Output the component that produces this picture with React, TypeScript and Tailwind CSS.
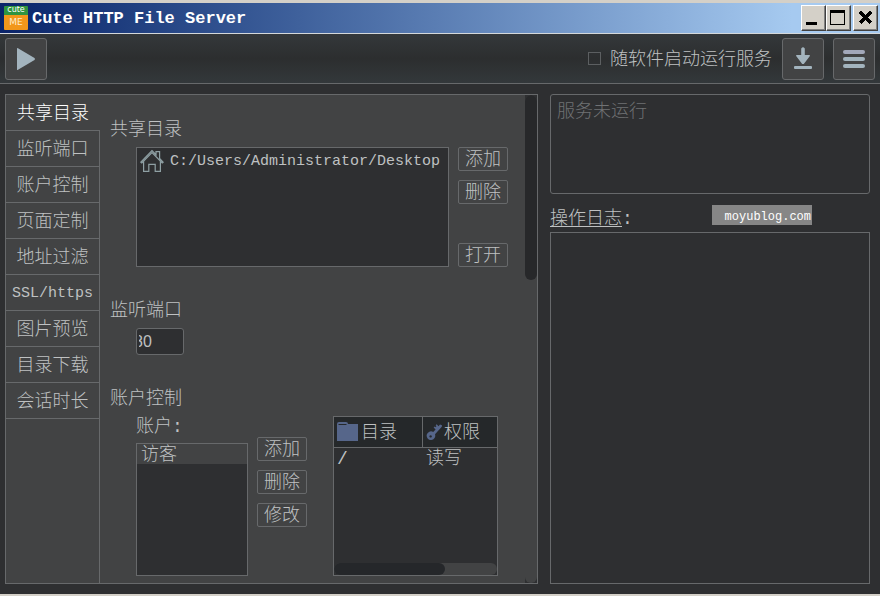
import React, { useState } from 'react';

const tabs = ['共享目录', '监听端口', '账户控制', '页面定制', '地址过滤', 'SSL/https', '图片预览', '目录下载', '会话时长'];

const isLatin = (text: string) => /^[\x20-\x7e]+$/.test(text);

const AppLogo: React.FC = () => (
  <div className="flex h-6 w-6 flex-col overflow-hidden rounded-[1px] text-center font-['DejaVu_Sans'] font-normal text-white" aria-hidden="true">
    <span className="h-[9px] bg-[#2f9440] text-[8px] leading-[8px]">cute</span>
    <span className="flex-1 bg-[#f2971b] text-[9px] leading-[15px] text-[#ffeccc]">ME</span>
  </div>
);

const CaptionButton: React.FC<{ label: string; children: React.ReactNode }> = ({ label, children }) => (
  <button
    aria-label={label}
    className="h-[26px] w-[25px] border border-t-white border-r-[#404040] border-b-[#404040] border-l-white bg-[#d4d0c8] shadow-[inset_-1px_-1px_0_#808080]"
  >
    <svg width="23" height="24" viewBox="0 0 23 24" fill="none" stroke="#000" shapeRendering="crispEdges">
      {children}
    </svg>
  </button>
);

const ToolButton: React.FC<{ label: string; onClick?: () => void; children: React.ReactNode }> = ({ label, onClick, children }) => (
  <button
    aria-label={label}
    onClick={onClick}
    className="h-[42px] w-[42px] shrink-0 rounded-[3px] border border-[#67696b] bg-[#424344]"
  >
    <svg width="40" height="40" viewBox="0 0 40 40" fill="#a3b4be">
      {children}
    </svg>
  </button>
);

const SmallButton: React.FC<{ children: React.ReactNode }> = ({ children }) => (
  <button className="h-6 w-[50px] rounded-[2px] border border-[#67696b] pt-px text-[18px] leading-[23px] whitespace-nowrap">
    {children}
  </button>
);

const HouseIcon: React.FC = () => (
  <svg width="24" height="24" viewBox="0 0 24 24" fill="none" stroke="#8fa0a4" strokeWidth="1.2" className="shrink-0" aria-hidden="true">
    <path d="M.8 13.2 12 1.6l4 4.1V2.6h3.6v6.8l3.6 3.8-1 .8L12 3.6 1.8 14z" />
    <path d="M3.6 12.2v10.2h5.2v-7h6.4v7h5.2V12.2" />
  </svg>
);

const FolderIcon: React.FC = () => (
  <svg width="22" height="20" viewBox="0 0 22 20" fill="#56668a" className="shrink-0" aria-hidden="true">
    <path d="M0 2Q0 0 2 0H9Q11 0 11 2H21V19H0z" />
    <path d="M1.500 2.500H9.500" stroke="#25282a" />
  </svg>
);

const KeyIcon: React.FC = () => (
  <svg width="17" height="18" viewBox="0 0 17 18" fill="#56668a" className="shrink-0" aria-hidden="true">
    <path
      fillRule="evenodd"
      d="M7.200 9 9.600 6.600 7.600 4.600 8.800 3.400 10 4.300 10.300 3 9.600 2.200 10.700 1.200 12.500 3.200 14 1.400 16 2.200 15.800 3.800 9 11.200A4.300 4.300 0 1 1 7.200 9zM4.600 12.200a1.200 1.200 0 1 0 .010 0z"
    />
  </svg>
);

const Section: React.FC<{ title: string; children: React.ReactNode }> = ({ title, children }) => (
  <section>
    <h2 className="text-[18px] leading-7">{title}</h2>
    {children}
  </section>
);

const App: React.FC = () => {
  const [activeTab, setActiveTab] = useState(tabs[0]);
  const [autoRun, setAutoRun] = useState(false);
  const [port, setPort] = useState('80');

  return (
    <div className="flex min-h-screen flex-col border-t-[3px] border-b-2 border-[#d4d0c8] bg-[#2e2f31] font-['Liberation_Mono','Noto_Sans_CJK_SC',monospace] font-light text-[#bfc1c2]">
      {/* Title bar */}
      <header className="flex h-[31px] items-center border-b border-[#d4d8da] bg-linear-to-r from-[#0a246a] to-[#a6caf0] to-90% pr-[2px] pl-1">
        <AppLogo />
        <h1 className="ml-1 flex-1 pt-[2px] text-[17px] font-bold text-white">Cute HTTP File Server</h1>
        <CaptionButton label="最小化">
          <path d="M4 17.500H15" strokeWidth="3" />
        </CaptionButton>
        <CaptionButton label="最大化">
          <path d="M3.500 5V18.500H17.500V5" />
          <path d="M3 5.500H18" strokeWidth="3" />
        </CaptionButton>
        <div className="ml-[2px] flex">
          <CaptionButton label="关闭">
            <path d="M6 6 17 17M17 6 6 17" strokeWidth="3.500" />
          </CaptionButton>
        </div>
      </header>

      {/* Toolbar */}
      <div className="flex h-[50px] items-center border-b border-[#67696b] bg-linear-to-b from-[#34383b] via-[#2c2e2f] to-[#33383b] px-[5px]">
        <ToolButton label="启动服务">
          <path d="M11 9.500Q11 8.500 12 9.200L28.500 19Q29.500 20 28.500 21L12 30.800Q11 31.500 11 30.500z" />
        </ToolButton>
        <label className="ml-auto flex items-center gap-[9px] text-[18px] leading-6">
          <input
            type="checkbox"
            checked={autoRun}
            onChange={(e) => setAutoRun(e.target.checked)}
            className="h-[13px] w-[13px] appearance-none border border-[#5c5f61] checked:bg-[#a3b4be]"
          />
          <span className="pt-[2px]">随软件启动运行服务</span>
        </label>
        <div className="ml-[10px] flex gap-[9px]">
          <ToolButton label="下载">
            <path d="M18.200 9.500Q20 7 21.800 9.500V16H26.500Q27.500 16.500 26.500 17.500L20.800 25H19.200L13.500 17.500Q12.500 16.500 13.500 16H18.200z" />
            <rect x="11" y="27" width="18" height="3" rx="1" />
          </ToolButton>
          <ToolButton label="菜单">
            <rect x="9" y="11" width="22" height="4" rx="2" fill="#a2a8ba" />
            <rect x="9" y="18" width="22" height="4" rx="2" />
            <rect x="9" y="25" width="22" height="4" rx="2" />
          </ToolButton>
        </div>
      </div>

      <main className="grid flex-1 grid-cols-[533fr_320fr] gap-3 py-[10px] pr-[10px] pl-[5px]">
        {/* Settings */}
        <div className="flex min-w-0 border border-[#67696b] bg-[#424344]">
          <nav role="tablist" className="flex w-[94px] shrink-0 flex-col">
            {tabs.map((tab) => (
              <button
                key={tab}
                role="tab"
                aria-selected={tab === activeTab}
                onClick={() => setActiveTab(tab)}
                className={`h-9 border-b border-[#67696b] pt-1 whitespace-nowrap ${isLatin(tab) ? 'text-[15px]' : 'text-[18px]'} ${
                  tab === activeTab ? 'text-white' : 'border-r'
                }`}
              >
                {tab}
              </button>
            ))}
            <div className="flex-1 border-r border-[#67696b]" />
          </nav>

          <div className="flex min-w-0 flex-1 flex-col gap-[30px] pt-[21px] pb-[7px] pl-[10px]">
            <Section title="共享目录">
              <div className="mt-[3px] flex gap-[9px] pr-[17px] pl-[26px]">
                <ul className="h-[120px] min-w-0 flex-1 border border-[#67696b] bg-[#2e2f31]">
                  <li className="flex h-[26px] items-center gap-[6px] pl-[3px] text-[15px]">
                    <HouseIcon />
                    <span className="pt-[3px]">C:/Users/Administrator/Desktop</span>
                  </li>
                </ul>
                <div className="flex flex-col gap-[9px]">
                  <SmallButton>添加</SmallButton>
                  <SmallButton>删除</SmallButton>
                  <div className="mt-auto flex">
                    <SmallButton>打开</SmallButton>
                  </div>
                </div>
              </div>
            </Section>

            <Section title="监听端口">
              <div className="mt-[3px] flex pl-[26px]">
                <input
                  aria-label="监听端口"
                  value={port}
                  onChange={(e) => setPort(e.target.value)}
                  className="h-[27px] w-12 rounded-[3px] border border-[#67696b] bg-[#2e2f31] pt-px pl-[2px] indent-[-5px] font-['Liberation_Sans',sans-serif] text-[16px]"
                />
              </div>
            </Section>

            <Section title="账户控制">
              <div className="flex pr-[27px] pl-[26px]">
                <div className="flex w-28 flex-col gap-[2px]">
                  <h3 className="text-[18px] leading-7">账户:</h3>
                  <ul className="h-[133px] border border-[#67696b] bg-[#2e2f31]">
                    <li className="h-5 bg-[#424344] pl-1 text-[18px] leading-[22px]">访客</li>
                  </ul>
                </div>
                <div className="ml-[9px] flex flex-col gap-[9px] pt-6">
                  <SmallButton>添加</SmallButton>
                  <SmallButton>删除</SmallButton>
                  <SmallButton>修改</SmallButton>
                </div>
                <div className="ml-[26px] flex min-w-0 flex-1 pt-[3px]">
                  <div className="flex h-[160px] flex-1 flex-col border border-[#67696b] bg-[#2e2f31]">
                    <table className="w-full table-fixed border-separate border-spacing-0 text-left text-[18px]">
                      <thead className="bg-[#25282a]">
                        <tr>
                          <th className="w-[89px] border-r border-b border-[#67696b] p-0 font-light">
                            <div className="flex h-[30px] items-center gap-[2px] pl-[3px]">
                              <FolderIcon />
                              <span className="pt-[2px]">目录</span>
                            </div>
                          </th>
                          <th className="border-b border-[#67696b] p-0 font-light">
                            <div className="flex h-[30px] items-center gap-px pl-[3px]">
                              <KeyIcon />
                              <span className="pt-[2px]">权限</span>
                            </div>
                          </th>
                        </tr>
                      </thead>
                      <tbody>
                        <tr className="h-[22px] leading-[22px]">
                          <td className="p-0 pl-[3px]">/</td>
                          <td className="p-0 pl-[3px]">读写</td>
                        </tr>
                      </tbody>
                    </table>
                    <div className="mt-auto h-3 rounded-full bg-[#424344]">
                      <div className="h-3 w-[68%] rounded-full bg-[#25272a]" />
                    </div>
                  </div>
                </div>
              </div>
            </Section>
          </div>

          <div className="flex w-3 shrink-0 bg-[#2e2f31]">
            <div className="flex-1 rounded-full bg-[#424344]">
              <div className="h-[38%] rounded-full bg-[#27282a]" />
            </div>
          </div>
        </div>

        {/* Status and log */}
        <div className="flex min-w-0 flex-col">
          <output className="h-[100px] rounded-[3px] border border-[#67696b] px-[6px] py-[3px] text-[18px] leading-7 text-[#707274]">
            服务未运行
          </output>
          <div className="flex h-[38px] items-center pt-2">
            <h2 className="pt-1 text-[18px] leading-6">
              <span className="underline underline-offset-2">操作日志</span>:
            </h2>
            <span className="mr-[58px] mb-1 ml-auto h-5 w-[100px] bg-[#868686] pr-px text-right text-[12px] leading-6 font-normal text-white">
              moyublog.com
            </span>
          </div>
          <div role="log" className="flex-1 border border-[#67696b]" />
        </div>
      </main>
    </div>
  );
};

export default App;
